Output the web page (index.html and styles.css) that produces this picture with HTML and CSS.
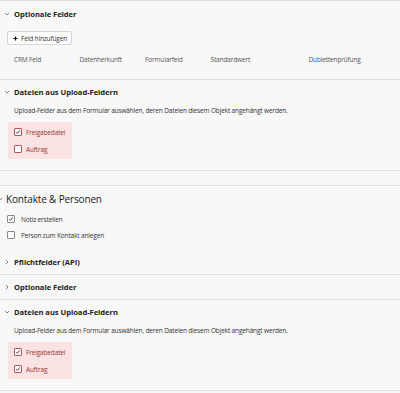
FILE: index.html
```html
<!DOCTYPE html>
<html lang="de">
<head>
    <meta charset="UTF-8">
    <meta name="viewport" content="width=device-width, initial-scale=1.0">
    <title>Formular-Zuordnung</title>
    <link rel="stylesheet" href="styles.css">
</head>
<body>
    <div class="panel">
        <section class="section">
            <div class="section-head">
                <svg class="chev" viewBox="0 0 6 6"><polyline points="1,2 3,4 5,2"/></svg>
                Optionale Felder
            </div>
            <div class="section-body">
                <button class="add-btn">
                    <svg class="plus" viewBox="0 0 6 6"><path d="M3 0.5v5M0.5 3h5"/></svg>
                    Feld hinzufügen
                </button>
                <div class="field-table">
                    <span class="col">CRM Feld</span>
                    <span class="col">Datenherkunft</span>
                    <span class="col">Formularfeld</span>
                    <span class="col wide">Standardwert</span>
                    <span class="col">Dublettenprüfung</span>
                </div>
            </div>
        </section>

        <section class="section">
            <div class="section-head">
                <svg class="chev" viewBox="0 0 6 6"><polyline points="1,2 3,4 5,2"/></svg>
                Dateien aus Upload-Feldern
            </div>
            <div class="section-body">
                <p class="hint">Upload-Felder aus dem Formular auswählen, deren Dateien diesem Objekt angehängt werden.</p>
                <div class="upload-list">
                    <label class="check"><span class="cb checked"><svg viewBox="0 0 8 8"><polyline points="1.6,4.2 3.2,5.8 6.4,1.8"/></svg></span>Freigabedatei</label>
                    <label class="check"><span class="cb"></span>Auftrag</label>
                </div>
            </div>
        </section>
    </div>

    <div class="group">
        <div class="group-head">
            <svg class="chev" viewBox="0 0 6 6"><polyline points="1,2 3,4 5,2"/></svg>
            Kontakte &amp; Personen
        </div>
        <label class="check plain"><span class="cb checked"><svg viewBox="0 0 8 8"><polyline points="1.6,4.2 3.2,5.8 6.4,1.8"/></svg></span>Notiz erstellen</label>
        <label class="check plain"><span class="cb"></span>Person zum Kontakt anlegen</label>

        <div class="subsections">
            <section class="section">
                <div class="section-head">
                    <svg class="chev" viewBox="0 0 6 6"><polyline points="2,1 4,3 2,5"/></svg>
                    Pflichtfelder (API)
                </div>
            </section>
            <section class="section">
                <div class="section-head">
                    <svg class="chev" viewBox="0 0 6 6"><polyline points="2,1 4,3 2,5"/></svg>
                    Optionale Felder
                </div>
            </section>
            <section class="section">
                <div class="section-head">
                    <svg class="chev" viewBox="0 0 6 6"><polyline points="1,2 3,4 5,2"/></svg>
                    Dateien aus Upload-Feldern
                </div>
                <div class="section-body">
                    <p class="hint">Upload-Felder aus dem Formular auswählen, deren Dateien diesem Objekt angehängt werden.</p>
                    <div class="upload-list">
                        <label class="check"><span class="cb checked"><svg viewBox="0 0 8 8"><polyline points="1.6,4.2 3.2,5.8 6.4,1.8"/></svg></span>Freigabedatei</label>
                        <label class="check"><span class="cb checked"><svg viewBox="0 0 8 8"><polyline points="1.6,4.2 3.2,5.8 6.4,1.8"/></svg></span>Auftrag</label>
                    </div>
                </div>
            </section>
        </div>
    </div>
</body>
</html>
```

FILE: styles.css
```css
body {
    margin: 0;
    font-family: "Open Sans", sans-serif;
    font-size: 6.5px;
    letter-spacing: -0.15px;
    color: #333;
    background-color: #f8f8f8;
    overflow: hidden;
}

.panel {
    border-top: 1px solid #dedede;
}

.section {
    border-bottom: 1px solid #dedede;
}

.section-head {
    height: 24px;
    display: flex;
    align-items: center;
    gap: 4px;
    padding-left: 4px;
    font-size: 7.6px;
    font-weight: 700;
    letter-spacing: -0.05px;
    color: #222;
}

.panel .section:first-child .section-head {
    height: 26px;
}

.chev {
    width: 6px;
    height: 6px;
    fill: none;
    stroke: #777;
    stroke-width: 0.9;
}

.section-body {
    padding: 0 0 11px 14px;
    display: flex;
    flex-direction: column;
    align-items: flex-start;
}

.add-btn {
    margin: 4px 0 0 -7px;
    height: 14px;
    padding: 0 4px 0 5px;
    display: flex;
    align-items: center;
    gap: 3px;
    font-family: inherit;
    font-size: 6.5px;
    letter-spacing: -0.15px;
    color: #333;
    background-color: #fff;
    border: 1px solid #d6d6d6;
    border-radius: 2px;
}

.plus {
    width: 5px;
    height: 5px;
    stroke: #111;
    stroke-width: 1.4;
}

.field-table {
    display: flex;
    height: 18px;
    margin-top: 5px;
    align-items: center;
    color: #555;
}

.col {
    width: 65.5px;
}

.col.wide {
    width: 98px;
}

.hint {
    margin: 2px 0 0;
    line-height: 10px;
}

.upload-list {
    margin: 6px 0 0 -6px;
    padding: 6px 7px 6px 6px;
    display: flex;
    flex-direction: column;
    gap: 9px;
    background-color: #fce3e3;
    color: #9a3434;
}

.check {
    display: flex;
    align-items: center;
    gap: 4px;
    height: 8px;
}

.cb {
    width: 6px;
    height: 6px;
    border: 1px solid #b05a5a;
    border-radius: 1px;
    background-color: #fff;
    display: flex;
}

.cb svg {
    width: 6px;
    height: 6px;
    fill: none;
    stroke: #6e1f1f;
    stroke-width: 1.2;
}

.group {
    margin-top: 14px;
    border-top: 1px solid #dedede;
}

.group-head {
    height: 25px;
    display: flex;
    align-items: center;
    gap: 3px;
    margin-left: -3px;
    font-size: 10px;
    letter-spacing: -0.15px;
    color: #222;
}

.check.plain {
    height: 16px;
    padding-left: 7px;
    gap: 6px;
    color: #333;
}

.check.plain .cb {
    border-color: #8c8c8c;
}

.check.plain .cb svg {
    stroke: #333;
}

.subsections {
    margin-top: 7px;
}
```
